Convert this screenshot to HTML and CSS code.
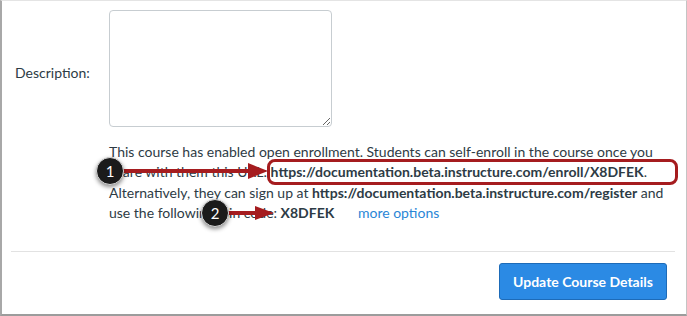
FILE: index.html
```html
<!DOCTYPE html>
<html>

<head>
  <meta charset="utf-8">
  <meta name="viewport" content="width=device-width, initial-scale=1">
  <title>Course Details</title>
  <link rel="stylesheet" href="styles.css">
</head>

<body>
  <div class="frame">
    <div class="form-grid">
      <label class="form-label" for="description">Description:</label>
      <textarea class="form-input" id="description"></textarea>
      <p class="enroll-note">
        This course has enabled open enrollment. Students can self-enroll in the course once you
        share with them this URL: <b>https://documentation.beta.instructure.com/enroll/X8DFEK</b>.
        Alternatively, they can sign up at <b>https://documentation.beta.instructure.com/register</b> and
        use the following join code: <b>X8DFEK</b> <a class="more-link" href="#">more options</a>
      </p>
    </div>
    <div class="divider"></div>
    <div class="form-actions">
      <button class="btn-primary">Update Course Details</button>
    </div>

    <!-- Callout overlay -->
    <div class="callout-box"></div>
    <svg class="callout-arrows" width="687" height="316" viewBox="0 0 687 316">
      <line x1="118" y1="171" x2="252" y2="171" stroke="#a51c1f" stroke-width="4"/>
      <polygon points="248,163 268,171 248,179" fill="#a51c1f"/>
      <line x1="222" y1="213" x2="258" y2="213" stroke="#a51c1f" stroke-width="4"/>
      <polygon points="255,206 274,213 255,220" fill="#a51c1f"/>
    </svg>
    <div class="badge badge-1">1</div>
    <div class="badge badge-2">2</div>
  </div>
</body>
</html>
```

FILE: styles.css
```css
/* Variables */
:root {
  --text: #2d3b45;
  --border: #c7cdd1;
  --blue: #2b8ae4;
  --red: #a51c1f;
}
/* Variables */

/* Boiler Plate */
*, ::after, ::before {
  box-sizing: border-box;
  margin: 0;
  padding: 0;
}
html {
  font-family: "Lato", "Open Sans", sans-serif;
  color: var(--text);
  background: white;
}
/* Boiler Plate */

/* UI COMPONENTS */
.frame {
  position: relative;
  width: 687px;
  height: 316px;
  border-top: 1px solid #e4e4e4;
  border-left: 2px solid #a8a8a8;
  border-right: 1px solid #c4c4c4;
  border-bottom: 2px solid #9c9c9c;
}
.form-grid {
  display: grid;
  grid-template-columns: 94px 1fr;
  align-items: center;
  padding: 9px 9px 0 13px;
}
.form-label {
  font-size: 14px;
  padding-top: 8px;
}
.form-input {
  width: 223px;
  height: 117px;
  border: 1px solid var(--border);
  border-radius: 4px;
  resize: vertical;
}
.enroll-note {
  grid-column: 2;
  margin-top: 15px;
  font-size: 14px;
  line-height: 20.3px;
}
.enroll-note b {
  font-weight: 700;
}
.more-link {
  margin-left: 20px;
  color: #2a86d6;
  text-decoration: none;
}
.divider {
  margin: 28px 11px 0 9px;
  border-top: 1px solid #e2e2e2;
}
.form-actions {
  display: flex;
  justify-content: flex-end;
  padding: 11px 19px 0 0;
}
.btn-primary {
  width: 168px;
  height: 37px;
  background: var(--blue);
  border: 1px solid #1d6bb8;
  border-radius: 3px;
  color: white;
  font-family: inherit;
  font-size: 14px;
  font-weight: 700;
}

/* Callouts */
.callout-box {
  position: absolute;
  left: 265px;
  top: 158px;
  width: 411px;
  height: 26px;
  border: 3px solid var(--red);
  border-radius: 8px;
}
.callout-arrows {
  position: absolute;
  left: -2px;
  top: -1px;
}
.badge {
  position: absolute;
  width: 28px;
  height: 28px;
  border-radius: 50%;
  background: #1b1b1b;
  border: 1px solid #d8d8d8;
  box-shadow: 0 2px 4px rgb(0 0 0 / 45%);
  color: white;
  font-size: 15px;
  display: flex;
  align-items: center;
  justify-content: center;
}
.badge-1 {
  left: 94px;
  top: 156px;
}
.badge-2 {
  left: 199px;
  top: 198px;
}
/* UI COMPONENTS */
```
